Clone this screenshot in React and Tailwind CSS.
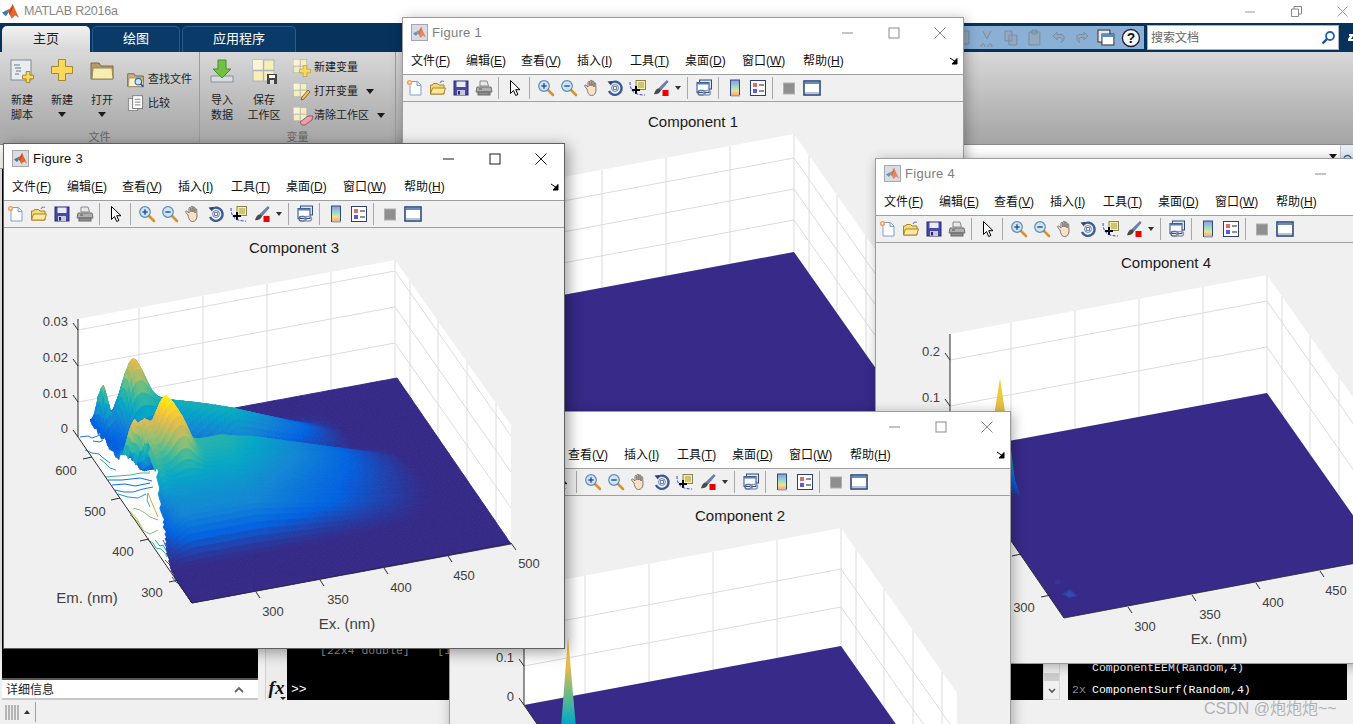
import React from 'react';

// ---- surface of Figure 3 ----
const PARULA = [[53,42,135],[3,99,225],[20,133,212],[6,167,198],[56,185,158],[146,191,115],[217,186,86],[252,206,46],[249,251,14]];
const parula = (t) => {
  const x = Math.min(0.999, Math.max(0, t)) ** 1.15 * (PARULA.length - 1);
  const i = Math.floor(x), f = x - i;
  const c = PARULA[i].map((p, k) => Math.round(p + (PARULA[i + 1][k] - p) * f));
  return `rgb(${c[0]},${c[1]},${c[2]})`;
};
const gs = (x, c, s) => Math.exp(-(((x - c) / s) ** 2) / 2);
const sm = (a, b, x) => {
  const t = Math.min(1, Math.max(0, (x - a) / (b - a)));
  return t * t * (3 - 2 * t);
};
const noise = (a, b) => {
  const s = Math.sin(a * 127.1 + b * 311.7) * 43758.5453;
  return s - Math.floor(s);
};

function height(u, v, i, j) {
  const R = 1 - 2.5 * (v - 0.45) ** 2;
  const F = Math.max(0, Math.min(1, 1 - (u - 0.3) / (0.58 * R)));
  const S = sm(0.18, 0.33, v) * (0.62 + 0.38 * sm(0.32, 0.6, v)) * (1 - sm(0.58, 0.66, v) * 0.9) * (1 - sm(0.78, 0.95, v) * 0.6);
  let z = 54 * F * S * sm(-0.03, 0.1, u);
  const rv = 0.9 - 0.16 * Math.min(1, Math.max(0, (u - 0.14) / 0.25));
  const A = sm(0.05, 0.14, u) * (u < 0.39 ? 44 : Math.max(0, 44 * (1 - (u - 0.39) / 0.36)));
  z += A * gs(v, rv, 0.065);
  z += 24 * sm(0.65, 0.8, v) * Math.exp(-u / 0.07);
  z += 36 * gs(u, 0.14, 0.028) * gs(v, 0.9, 0.05);
  z += 47 * gs(u, 0.123, 0.033) * gs(v, 0.589, 0.05);
  z += 25 * gs(u, 0.158, 0.028) * gs(v, 0.522, 0.035);
  z += 28 * gs(u, 0.055, 0.016) * gs(v, 0.68, 0.045);
  z += 42 * gs(u, 0.064, 0.01) * gs(v, 0.96, 0.03);
  // the cut edge of the data stands up as a ridge, with a blue hollow behind it
  z += 22 * sm(0.35, 0.5, v) * (1 - sm(0.66, 0.72, v)) * gs(u, 0.06, 0.014);
  z += 18 * gs(v, 0.65, 0.05) * (1 - sm(0.05, 0.09, u));
  z += 10 * (noise(i, j) - 0.4) * Math.exp(-u / 0.07) * sm(0.58, 0.72, v);
  return Math.max(0, z);
}
// the jagged peaks are more orange than their height gives
const tint = (u, v) => 22 * gs(u, 0.055, 0.02) * gs(v, 0.68, 0.05) + 15 * gs(u, 0.064, 0.012) * gs(v, 0.96, 0.04);

const project = (u, v, z) => [192 + 319 * u - 114 * v, 603 - 59 * u - 166 * v - z];

function buildMesh() {
  const NU = 100, NV = 72, quads = [];
  const us = Array.from({ length: NU + 1 }, (_, i) => (i / NU) ** 1.6);
  const pts = [];
  for (let j = 0; j <= NV; j++) {
    pts.push(us.map((u, i) => height(u, j / NV, i, j)));
  }
  for (let j = NV - 1; j >= 0; j--) {
    const v0 = j / NV, v1 = (j + 1) / NV;
    const cut = (v0 < 0.58 ? 0.05 * sm(0.12, 0.5, v0) : 0.03) + 0.006 * noise(j, 3) * sm(0.2, 0.4, v0);
    for (let i = NU - 1; i >= 0; i--) {
      if (us[i] < cut) continue;
      const a = project(us[i], v0, pts[j][i]);
      const b = project(us[i + 1], v0, pts[j][i + 1]);
      const c = project(us[i + 1], v1, pts[j + 1][i + 1]);
      const d = project(us[i], v1, pts[j + 1][i]);
      const avg = (pts[j][i] + pts[j][i + 1] + pts[j + 1][i] + pts[j + 1][i + 1]) / 4;
      quads.push({ p: [a, b, c, d].map((q) => q[0].toFixed(1) + ',' + q[1].toFixed(1)).join(' '), c: parula((avg + tint(us[i], v0)) / 105) });
    }
  }
  return quads;
}
const MESH = buildMesh();

const CONTOURS = [
  ['#1a78d8', '80,437 88,436 92,438 100,435 105,433'],
  ['#1a78d8', '93,441 100,442 103,440'],
  ['#1f8fd0', '85,450 92,453 99,454 102,457 110,463'],
  ['#2aa8b8', '100,459 106,464 110,468 116,470'],
  ['#38b99e', '105,477 118,476 130,475 141,473 150,473'],
  ['#0f6fe0', '108,480 122,480 140,478 152,481'],
  ['#0f6fe0', '112,485 125,484 135,486 150,483'],
  ['#1a78d8', '115,490 124,492 133,492 143,489 153,487'],
  ['#1a9ad0', '118,494 128,497 138,498 146,494'],
  ['#d9ba56', '140,470 146,468 150,472'],
  ['#d9a83a', '148,493 152,503 155,510 158,517'],
  ['#92bf73', '133,508 140,510 145,513 150,517 158,520'],
  ['#38b99e', '148,493 147,500 150,507'],
  ['#92bf73', '130,515 138,522 144,531 150,534 158,530'],
  ['#d9ba56', '130,511 137,519 142,528'],
  ['#38b99e', '148,540 153,543 156,548 161,549 165,553 167,557'],
  ['#06a7c6', '155,540 160,546 163,545 167,552 170,555'],
  ['#1a78d8', '163,540 168,551 172,555 175,562 178,566'],
  ['#1a78d8', '165,560 170,565 175,566'],
  ['#0363e1', '172,577 176,582 181,585'],
];

// ---- axes, shared by the four figures ----
function Plot({ title, levels, topLeft, extra }) {
  const a = levels;
  const left = a.map((l) => l[0]);
  return (
    <svg width="560" height="420" viewBox="4 228 560 420" className="block">
      <defs>
        <linearGradient id="spikeA" gradientUnits="userSpaceOnUse" x1="0" y1="369" x2="0" y2="470">
          <stop offset="0" stopColor="#f9d030" />
          <stop offset="0.3" stopColor="#e5b84e" />
          <stop offset="0.6" stopColor="#5cba90" />
          <stop offset="0.85" stopColor="#06a7c6" />
          <stop offset="1" stopColor="#1485d4" />
        </linearGradient>
        <linearGradient id="spikeB" gradientUnits="userSpaceOnUse" x1="0" y1="363" x2="0" y2="482">
          <stop offset="0" stopColor="#fbd12c" />
          <stop offset="0.35" stopColor="#d9ba56" />
          <stop offset="0.65" stopColor="#06a7c6" />
          <stop offset="0.88" stopColor="#0363e1" />
          <stop offset="1" stopColor="#352a87" />
        </linearGradient>
      </defs>
      <text x="294" y="253" textAnchor="middle" fontSize="15" fill="#1a1a1a">{title}</text>
      <polygon points={`78,${topLeft} 395,260 395,378 78,437`} fill="#fff" />
      <polygon points="395,260 511,425 511,543 395,378" fill="#fff" />
      <g stroke="#dcdcdc" strokeWidth="1" fill="none">
        {[139, 203, 267, 331].map((x) => (
          <line key={x} x1={x} x2={x} y1={topLeft - (x - 78) * 0.186} y2={437 - (x - 78) * 0.186} />
        ))}
        {left.slice(1).map((y) => (
          <line key={y} x1="78" y1={y} x2="395" y2={y - 59} />
        ))}
        {left.slice(1).map((y) => (
          <line key={'r' + y} x1="395" y1={y - 59} x2="511" y2={y - 59 + 165} />
        ))}
        {[410, 438, 467, 496].map((x) => (
          <line key={x} x1={x} x2={x} y1={260 + (x - 395) * 1.422} y2={378 + (x - 395) * 1.422} />
        ))}
        <line x1="395" y1="260" x2="395" y2="378" />
      </g>
      {extra}
      <g stroke="#2b2b2b" strokeWidth="1" fill="none">
        <line x1="78" y1={topLeft} x2="78" y2="437" />
        <line x1="78" y1="437" x2="192" y2="603" />
        <line x1="192" y1="603" x2="511" y2="543" strokeWidth="0.8" />
        {left.map((y) => <line key={y} x1="78" y1={y} x2="73" y2={y - 7} />)}
        <path d="M92 457l-9 2M120 498l-9 2M149 539l-9 2M179 580l-10 2" />
        <path d="M256 592l4 6M320 580l4 6M384 568l4 6M448 556l4 6M511 543l5 7" />
      </g>
      <g fontSize="13" fill="#404040">
        {a.map((l) => (
          <text key={l[1]} x="68" y={l[0] - 4.5} textAnchor="end">{l[1]}</text>
        ))}
        <text x="66" y="475" textAnchor="middle">600</text>
        <text x="95" y="516" textAnchor="middle">500</text>
        <text x="123" y="556" textAnchor="middle">400</text>
        <text x="152" y="597" textAnchor="middle">300</text>
        <text x="273" y="616" textAnchor="middle">300</text>
        <text x="338" y="604" textAnchor="middle">350</text>
        <text x="401" y="592" textAnchor="middle">400</text>
        <text x="464" y="580" textAnchor="middle">450</text>
        <text x="529" y="568" textAnchor="middle">500</text>
        <text x="87" y="603" textAnchor="middle" fontSize="15">Em. (nm)</text>
        <text x="347" y="629" textAnchor="middle" fontSize="15">Ex. (nm)</text>
      </g>
    </svg>
  );
}

const Floor = () => <polygon points="78,437 395,378 511,543 192,603" fill="#372a88" />;

const Surface3 = () => (
  <g>
    <polygon points="78,437 395,378 511,543 192,603" fill="#fff" />
    <g fill="none" strokeWidth="1">
      {CONTOURS.map((c, i) => <polyline key={i} points={c[1]} stroke={c[0]} />)}
    </g>
    {MESH.map((q, i) => <polygon key={i} points={q.p} fill={q.c} stroke={q.c} strokeWidth="0.9" />)}
  </g>
);

const Surface2 = () => (
  <g>
    <Floor />
    <polygon points="122,369 115,460 130,460" fill="url(#spikeA)" />
  </g>
);

const Surface4 = () => (
  <g>
    <Floor />
    <polygon points="128,363 119,420 112,470 150,484 143,465 139,435 133,397" fill="url(#spikeB)" />
    <polygon points="190,579 198,574 206,581 197,583" fill="#3358c0" opacity="0.45" />
    <polygon points="194,579 198,576 203,581 197,582" fill="#2a5cd0" opacity="0.5" />
    <polygon points="182,566 186,564 190,568 184,570" fill="#4a40a8" opacity="0.35" />
  </g>
);

// ---- small drawings ----
const Logo = ({ s = 16, faded }) => (
  <svg width={s} height={s} viewBox="0 0 20 20" className={faded ? 'opacity-70' : ''}>
    <polygon points="0,11.5 5,8.5 8,11 4.5,15.5" fill="#2f7fb8" />
    <polygon points="5,8.5 8,11 11,6 12.5,2 9,7" fill="#d9541e" />
    <polygon points="12.5,1 15.5,8 20,17.5 15.5,14.5 11.5,18.5 9,14 8,11 11,6" fill="#e8652a" />
    <polygon points="12.5,1 11,6 8,11 9,14 11,9 12.5,6" fill="#b8361a" />
  </svg>
);

const Ic = ({ children }) => <svg width="18" height="18" viewBox="0 0 18 18">{children}</svg>;
const NewIcon = () => <Ic><path d="M4 2.5h7.5l3.5 3.5v10H4z" fill="#fff" stroke="#7f9fc8" /><path d="M11 2.5v4h4" fill="#dfe8f4" stroke="#7f9fc8" /><circle cx="3.5" cy="3.5" r="2.6" fill="#f4a060" /><circle cx="3.5" cy="3.5" r="1" fill="#fff" /></Ic>;
const OpenIcon = () => <Ic><path d="M1.5 15V6h2l1-1.5h4L10 6h5v9z" fill="#f5d878" stroke="#a8852a" /><path d="M1.5 15l2-6h13l-2 6z" fill="#fbe9a0" stroke="#a8852a" /><path d="M11 4c1-2 3-2.5 4-1.5" fill="none" stroke="#6f8fb8" strokeWidth="1.2" /></Ic>;
const SaveIcon = () => <Ic><rect x="2" y="2" width="14" height="14" fill="#4848a8" stroke="#282870" /><rect x="4.5" y="2.5" width="9" height="5.5" fill="#e8ecf8" /><rect x="5" y="11" width="8" height="5" fill="#c8c8d8" /><rect x="6" y="12" width="2" height="3.5" fill="#282870" /></Ic>;
const PrintIcon = () => <Ic><path d="M5 2h7l1.5 5H5z" fill="#e8e8e8" stroke="#8a8a8a" /><path d="M2 8h14l1 5H1z" fill="#b0b0b0" stroke="#707070" /><rect x="3" y="13" width="12" height="3" fill="#8f8f8f" stroke="#666" /><path d="M4 10h3" stroke="#555" /></Ic>;
const CursorIcon = () => <Ic><path d="M4.5 1.5v13l3-3 2.2 5 2.2-1-2.2-4.8h4.3z" fill="#fff" stroke="#000" strokeWidth="1" /></Ic>;
const Lens = ({ plus }) => (
  <Ic>
    <path d="M10.5 10.5l5.5 5.5" stroke="#d8932c" strokeWidth="2.6" strokeLinecap="round" />
    <circle cx="7" cy="7" r="5.3" fill="#cfe4f6" stroke="#5d8bb5" strokeWidth="1.2" />
    <path d="M4.3 7h5.4" stroke="#20508c" strokeWidth="1.4" />
    {plus && <path d="M7 4.3v5.4" stroke="#20508c" strokeWidth="1.4" />}
  </Ic>
);
const HandIcon = () => <Ic><path d="M4 10L1.8 7.5c-.8-1 .4-2 1.3-1.2L5 8V3.4c0-1.3 1.6-1.3 1.7 0L7 7V2.2c0-1.3 1.8-1.3 1.8 0L9 7V2.8c0-1.3 1.8-1.3 1.8 0L11 8V4.6c0-1.2 1.7-1.2 1.7 0l.3 6.4c0 3-1.6 5.5-4.5 5.5S5 14 4 10z" fill="#fbe0c4" stroke="#5a5a5a" strokeWidth="0.8" /></Ic>;
const RotateIcon = () => <Ic><path d="M5 4A6.6 6.6 0 1 1 3 12" fill="none" stroke="#3c5a94" strokeWidth="2.4" /><path d="M1.5 2.5L6.5 2 5 6.5z" fill="#2c3f70" /><circle cx="9" cy="9" r="3.4" fill="#fff" stroke="#5d7aa8" /><path d="M7.5 7.5h3v3h-3z" fill="none" stroke="#3c5a94" strokeWidth="0.8" /></Ic>;
const DataIcon = () => <Ic><rect x="7" y="1.5" width="9.5" height="9" fill="#f7ef9c" stroke="#8c8450" /><path d="M9 4h6M9 6h6M9 8h6" stroke="#8c8450" strokeWidth="0.8" /><path d="M7 7v8M3 11h8" stroke="#000" strokeWidth="2" /><path d="M1 3c0 7 2 13 15 13" fill="none" stroke="#2030e0" strokeDasharray="3 1.4" strokeWidth="0.9" /></Ic>;
const BrushIcon = () => <Ic><path d="M14.8 1.5l1.4 1.2L9 11l-2-1.8z" fill="#6a84b8" stroke="#4a5a80" strokeWidth="0.6" /><path d="M7 9.2c-2.5.2-4 2.4-5 6 3 .3 6-.6 7-4.2z" fill="#4a4a4a" /><rect x="10.5" y="11" width="6" height="6" fill="#ee0000" /></Ic>;
const SmallArrow = () => <svg width="6" height="4" viewBox="0 0 6 4"><path d="M0 0h6L3 4z" fill="#333" /></svg>;
const LinkIcon = () => <Ic><rect x="4.5" y="1" width="12" height="9" fill="#dfe6f2" stroke="#2c4a80" /><rect x="2" y="3.5" width="12" height="10" fill="#fff" stroke="#2c4a80" /><rect x="2" y="3.5" width="12" height="2" fill="#5b7bb0" /><rect x="3" y="11.5" width="7" height="4.5" rx="2.2" fill="none" stroke="#5a6e90" strokeWidth="1.4" /><rect x="8.5" y="11.5" width="7" height="4.5" rx="2.2" fill="none" stroke="#8a9ab8" strokeWidth="1.4" /></Ic>;
const BarIcon = () => (
  <Ic>
    <defs>
      <linearGradient id="cbar" x1="0" y1="0" x2="0" y2="1">
        <stop offset="0" stopColor="#8a9ae0" />
        <stop offset="0.45" stopColor="#a0dcc8" />
        <stop offset="0.7" stopColor="#f0e090" />
        <stop offset="1" stopColor="#f0a880" />
      </linearGradient>
    </defs>
    <rect x="4.5" y="1" width="9" height="15.5" fill="url(#cbar)" stroke="#2c4a80" />
    <rect x="5" y="16" width="9" height="1.5" fill="#9aa4b8" />
  </Ic>
);
const LegendIcon = () => <Ic><rect x="1.5" y="1.5" width="15" height="15" fill="#fff" stroke="#2c3f78" /><rect x="4" y="4" width="4" height="4" fill="#e06a6a" /><rect x="4" y="10" width="4" height="4" fill="#5a5ae0" /><path d="M10 6h5M10 12h5" stroke="#222" strokeWidth="1.2" /></Ic>;
const GrayIcon = () => <Ic><rect x="3.5" y="4" width="11" height="11" fill="#8f8f8f" stroke="#b0b0b0" /></Ic>;
const ToolsIcon = () => <Ic><rect x="1" y="2" width="16" height="14" fill="#fff" stroke="#2c4a80" strokeWidth="1.6" /><rect x="2" y="3" width="14" height="2" fill="#6a8ab8" /><rect x="2" y="13" width="14" height="2" fill="#b8c4d4" /></Ic>;

const TOOLS = [NewIcon, OpenIcon, SaveIcon, PrintIcon, '|', CursorIcon, '|', () => <Lens plus />, () => <Lens />, HandIcon, RotateIcon, DataIcon, BrushIcon, 'a', '|', LinkIcon, '|', BarIcon, LegendIcon, '|', GrayIcon, ToolsIcon];
const MENUS = [['文件', 'F', 'w-[38px]'], ['编辑', 'E', 'w-[38px]'], ['查看', 'V', 'w-[39px]'], ['插入', 'I', 'w-[36px]'], ['工具', 'T', 'w-[38px]'], ['桌面', 'D', 'w-[40px]'], ['窗口', 'W', 'w-[44px]'], ['帮助', 'H', 'w-[41px]']];

// one figure window
function Figure({ n, active, className, levels, topLeft, extra }) {
  const ctl = active ? '#1a1a1a' : '#8a8a8a';
  return (
    <div className={`absolute w-[562px] h-[506px] bg-[#f0f0f0] border flex flex-col ${active ? 'border-[#5f5f5f] shadow-[3px_3px_14px_rgba(0,0,0,0.4)]' : 'border-[#9c9c9c] shadow-[2px_2px_12px_rgba(0,0,0,0.3)]'} ${className}`}>
      <div className="h-[29px] bg-white flex items-center pl-[8px] relative">
        <span className="w-[17px] h-[17px] bg-[#d8dce4] border border-[#a8a8a8] flex items-center justify-center">
          <Logo s={13} faded={!active} />
        </span>
        <span className={`ml-[4px] text-[13px] tracking-[0.3px] ${active ? 'text-[#111]' : 'text-[#7e7e7e]'}`}>Figure {n}</span>
        <span className="ml-auto flex items-center gap-[34px] pr-[17px]">
          <svg width="12" height="12" viewBox="0 0 12 12"><path d="M0 6h11" stroke={ctl} /></svg>
          <svg width="12" height="12" viewBox="0 0 12 12"><rect x="1" y="1" width="10" height="10" fill="none" stroke={ctl} /></svg>
          <svg width="12" height="12" viewBox="0 0 12 12"><path d="M.5.5l11 11M11.5.5l-11 11" stroke={ctl} /></svg>
        </span>
      </div>
      <div className="h-[27px] bg-white border-b border-[#a0a0a0] box-content flex items-center pl-[8px] gap-[17px] text-[12px] text-[#111] relative">
        {MENUS.map((m) => (
          <span key={m[1]} className={`whitespace-nowrap ${m[2]}`}>{m[0]}(<span className="underline">{m[1]}</span>)</span>
        ))}
        <svg width="8" height="8" viewBox="0 0 8 8" className="absolute right-[5px] top-[10px]"><path d="M0 1l6 4M7 1.5V7H2z" stroke="#000" fill="#000" /></svg>
      </div>
      <div className="h-[26px] border-b border-[#a0a0a0] box-content flex items-center">
        {TOOLS.map((T, i) =>
          T === '|' ? <span key={i} className="w-[1px] h-[22px] bg-[#a8a8a8] ml-[3px] mr-[4px]" />
          : T === 'a' ? <span key={i} className="w-[12px] flex justify-center"><SmallArrow /></span>
          : <span key={i} className="w-[23px] flex justify-center"><T /></span>
        )}
      </div>
      <Plot title={`Component ${n}`} levels={levels} topLeft={topLeft} extra={extra} />
    </div>
  );
}

// ---- ribbon drawings ----
const R = ({ children, s = 24 }) => <svg width={s} height={s} viewBox="0 0 24 24">{children}</svg>;
const Plus = ({ x, y, r }) => <path d={`M${x - r / 3} ${y - r}h${(r * 2) / 3}v${(r * 2) / 3}h${(r * 2) / 3}v${(r * 2) / 3}h${(-r * 2) / 3}v${(r * 2) / 3}h${(-r * 2) / 3}v${(-r * 2) / 3}h${(-r * 2) / 3}v${(-r * 2) / 3}h${(r * 2) / 3}z`} fill="#fbd85a" stroke="#a8862c" />;
const NewScript = () => <R><rect x="1" y="1" width="20" height="20" fill="#e8edf2" stroke="#7f8a94" /><path d="M4 6h6M5 9h6M6 12h5M5 15h4" stroke="#6b7680" strokeWidth="1.2" /><Plus x={18} y={18} r={5.5} /></R>;
const BigPlus = () => <R><Plus x={12} y={11} r={10.5} /></R>;
const BigFolder = () => <R><path d="M1 20V4h8l2 3h12v13z" fill="#b59a6a" stroke="#7a6a4a" /><path d="M2 20l1-11h19l1 11z" fill="#f7edb0" stroke="#9a8a5a" /></R>;
const Grid = ({ s = 24 }) => (
  <R s={s}>
    <rect x="1" y="1" width="21" height="21" fill="#f9eeb4" stroke="#a8b4c8" />
    <rect x="1" y="1" width="10" height="10" fill="#fbf5d4" />
    <path d="M11.5 1v21M1 11.5h21" stroke="#a8b4c8" strokeWidth="1.4" />
  </R>
);
const ImportIcon = () => <R><path d="M1 17h22v6H1z" fill="#d8dce0" stroke="#8a9098" /><path d="M8 1h8v9h5L12 19 3 10h5z" fill="#72c242" stroke="#4a8a2c" /></R>;
const SaveVar = () => (
  <span className="relative block w-[24px] h-[24px]">
    <Grid />
    <svg width="10" height="10" viewBox="0 0 10 10" className="absolute right-[-1px] bottom-[-1px]"><rect width="10" height="10" fill="#444" /><rect x="2" y="1" width="6" height="3" fill="#fff" /><rect x="3" y="6" width="4" height="4" fill="#ddd" /></svg>
  </span>
);
const SmFolder = () => <R s={17}><path d="M1 22V4h9l2 3h11v15z" fill="#c8b080" stroke="#7a6a4a" strokeWidth="1.4" /><path d="M2 22l1-12h19l1 12z" fill="#fbf5d8" stroke="#9a8a5a" /><circle cx="16" cy="15" r="4.5" fill="#cfe4f6" stroke="#3a6ea0" strokeWidth="1.6" /><path d="M19 18l4 4" stroke="#20508c" strokeWidth="2.4" /></R>;
const SmCompare = () => <R s={17}><rect x="2" y="5" width="13" height="17" fill="#eee" stroke="#8a8a8a" strokeWidth="1.3" /><rect x="8" y="1" width="14" height="18" fill="#fff" stroke="#777" strokeWidth="1.3" /><path d="M11 6h8M11 10h8M11 14h8" stroke="#777" strokeWidth="1.3" /></R>;
const VarIcon = ({ kind }) => (
  <span className="relative block w-[17px] h-[17px]">
    <Grid s={15} />
    {kind === 'new' && <svg width="12" height="12" viewBox="0 0 24 24" className="absolute right-[-1px] bottom-[-1px]"><Plus x={12} y={12} r={11} /></svg>}
    {kind === 'open' && <svg width="12" height="12" viewBox="0 0 12 12" className="absolute right-[-2px] bottom-[-1px]"><path d="M1 11l1-3 6-7 2 2-6 7z" fill="#f3c060" stroke="#8a6a2c" /></svg>}
    {kind === 'clear' && <svg width="15" height="11" viewBox="0 0 15 11" className="absolute right-[-4px] bottom-[-2px]"><path d="M1 7l8-6h5l-1 4-7 5H3z" fill="#eaa0ac" stroke="#9a5a68" /></svg>}
  </span>
);
const Tri = () => <svg width="8" height="5" viewBox="0 0 8 5"><path d="M0 0h8L4 5z" fill="#1a1a1a" /></svg>;

function BigBtn({ icon, l1, l2, tri, w = 'w-[40px]' }) {
  return (
    <div className={`${w} flex flex-col items-center pt-[7px]`}>
      <div className="h-[26px]">{icon}</div>
      <div className="mt-[8px] text-[11px] leading-[15px] text-[#222] whitespace-nowrap">{l1}</div>
      {l2 && <div className="text-[11px] leading-[15px] text-[#222] whitespace-nowrap">{l2}</div>}
      {tri && <div className="mt-[4px]"><Tri /></div>}
    </div>
  );
}

function SmBtn({ icon, label, tri, gap = 'gap-[4px]' }) {
  return (
    <div className={`flex items-center ${gap} h-[24px] text-[11px] text-[#222] whitespace-nowrap`}>
      {icon}<span>{label}</span>
      {tri && <span className="ml-[4px] flex items-center"><Tri /></span>}
    </div>
  );
}

const Q = ({ d }) => <svg width="18" height="18" viewBox="0 0 18 18" className="opacity-60"><path d={d} fill="#9aa6b2" stroke="#6a7684" /></svg>;

const Tab = ({ children, w, on }) => (
  <div className={`${w} h-[26px] rounded-t-[5px] flex items-center justify-center pb-[1px] text-[13px] ${on ? 'bg-gradient-to-b from-[#f2f2f2] to-[#d6d6d6] text-[#222]' : 'bg-[#0a3a68] border border-b-0 border-[#2a5c8c] text-white'}`}>
    {children}
  </div>
);

export default function App() {
  return (
    <div className="relative w-[1353px] h-[724px] overflow-hidden bg-[#f0f0f0] flex flex-col [font-family:'Liberation_Sans','Noto_Sans_CJK_SC',sans-serif]">
      {/* main MATLAB window */}
      <div className="h-[23px] bg-white flex items-center pl-[2px] shrink-0">
        <Logo s={17} />
        <span className="ml-[5px] text-[12.5px] text-[#858585] tracking-[-0.2px]">MATLAB R2016a</span>
        <span className="ml-auto flex items-center gap-[35px] pr-[5px]">
          <svg width="11" height="11" viewBox="0 0 11 11"><path d="M0 6h10" stroke="#9a9a9a" /></svg>
          <svg width="11" height="11" viewBox="0 0 11 11"><path d="M.5 3h7v7.5h-7zM3 3V.5h7.5v7.5H8" fill="none" stroke="#8a8a8a" /></svg>
          <svg width="11" height="11" viewBox="0 0 11 11"><path d="M.5.5l10 10M10.5.5l-10 10" stroke="#9a9a9a" /></svg>
        </span>
      </div>
      <div className="h-[29px] bg-[#06325c] flex items-end pl-[2px] gap-[2px] shrink-0 relative">
        <Tab w="w-[88px]" on>主页</Tab>
        <Tab w="w-[88px]">绘图</Tab>
        <Tab w="w-[114px]">应用程序</Tab>
        <div className="ml-auto self-center flex items-center gap-[3px]">
          <div className="w-[190px] h-[23px] bg-[#8bb0d6] flex items-center justify-end pr-[3px] gap-[6px]">
            <Q d="M2 2h13v13H2z" />
            <Q d="M5 2l4 8 4-8M5 15a2 2 0 1 0 .1 0zM12 15a2 2 0 1 0 .1 0z" />
            <Q d="M3 2h7v10H3zM7 6h8v10H7z" />
            <Q d="M3 3h11v13H3zM6 1h5v4H6z" />
            <Q d="M3 7l4-4v2.5h5c3 0 3 7-1 8 2-2 1-5-1-5H7V11z" />
            <Q d="M15 7l-4-4v2.5H6c-3 0-3 7 1 8-2-2-1-5 1-5h3V11z" />
            <svg width="18" height="18" viewBox="0 0 18 18"><rect x="1" y="1" width="12" height="12" fill="#e8e8e8" stroke="#333" /><rect x="5" y="5" width="12" height="11" fill="#fff" stroke="#333" /><rect x="5" y="5" width="12" height="3" fill="#5a8ac0" /></svg>
            <svg width="20" height="20" viewBox="0 0 20 20"><circle cx="10" cy="10" r="8.6" fill="#f4f6f8" stroke="#223" strokeWidth="1.4" /><text x="10" y="15" textAnchor="middle" fontSize="14" fontWeight="700" fill="#111">?</text></svg>
          </div>
          <div className="w-[192px] h-[25px] bg-white border border-[#b0b0b0] flex items-center pl-[3px] pr-[2px] text-[12px] text-[#666]">
            搜索文档
            <svg width="15" height="15" viewBox="0 0 15 15" className="ml-auto"><circle cx="9" cy="6" r="4" fill="#fff" stroke="#1c62b8" strokeWidth="1.8" /><path d="M6 9l-4.5 4.5" stroke="#1c4f98" strokeWidth="2.4" /></svg>
          </div>
          <svg width="11" height="10" viewBox="3 0 11 10"><path d="M10 1h4v2l-2 3h2v2h-5V6l2-3h-1z" fill="#fff" /></svg>
        </div>
      </div>
      {/* ribbon */}
      <div className="h-[93px] shrink-0 bg-gradient-to-b from-[#d8d8d8] to-[#a4a4a4] flex border-b border-[#8a8a8a]">
        <div className="w-[200px] border-r border-[#9c9c9c] flex flex-col">
          <div className="flex-1 flex pl-[2px]">
            <BigBtn icon={<NewScript />} l1="新建" l2="脚本" />
            <BigBtn icon={<BigPlus />} l1="新建" tri />
            <BigBtn icon={<BigFolder />} l1="打开" tri />
            <div className="ml-[5px] pt-[15px]">
              <SmBtn icon={<SmFolder />} label="查找文件" />
              <SmBtn icon={<SmCompare />} label="比较" />
            </div>
          </div>
          <div className="h-[14px] bg-[#adadad] text-center text-[11px] leading-[14px] text-[#666]">文件</div>
        </div>
        <div className="w-[196px] border-r border-[#9c9c9c] flex flex-col">
          <div className="flex-1 flex pl-[2px]">
            <BigBtn icon={<ImportIcon />} l1="导入" l2="数据" />
            <BigBtn icon={<SaveVar />} l1="保存" l2="工作区" w="w-[44px]" />
            <div className="ml-[7px] pt-[3px]">
              <SmBtn icon={<VarIcon kind="new" />} label="新建变量" />
              <SmBtn icon={<VarIcon kind="open" />} label="打开变量" tri />
              <SmBtn icon={<VarIcon kind="clear" />} label="清除工作区" tri />
            </div>
          </div>
          <div className="h-[14px] bg-[#adadad] text-center text-[11px] leading-[14px] text-[#666]">变量</div>
        </div>
      </div>
      {/* address strip */}
      <div className="h-[24px] shrink-0 bg-white border-b border-[#a0a0a0] flex justify-end">
        <span className="mt-[9px] mr-[3px]"><Tri /></span>
        <span className="w-[13px] h-[14px] bg-[#e8eef6] border-l border-[#c8c8c8] flex items-end justify-center">
          <svg width="9" height="7" viewBox="0 0 9 7"><path d="M1 7a3.5 3.5 0 0 1 7 0" fill="none" stroke="#2c6ab8" strokeWidth="1.5" /></svg>
        </span>
      </div>
      {/* panels */}
      <div className="flex-1 min-h-0 flex pl-[2px]">
        <div className="w-[256px] flex flex-col">
          <div className="flex-1 bg-black" />
          <div className="h-[22px] bg-white border-t-2 border-[#555] border-b-2 border-b-[#c8c8c8] flex items-center pt-[1px] pl-[4px] pr-[14px] text-[12px] text-[#222]">
            详细信息
            <svg width="10" height="7" viewBox="0 0 10 7" className="ml-auto"><path d="M1 6l4-4 4 4" fill="none" stroke="#666" strokeWidth="1.8" /></svg>
          </div>
        </div>
        <div className="w-[7px]" />
        <div className="w-[22px] bg-[#ececec] border-l border-[#d0d0d0] flex flex-col justify-end items-center pb-[1px] relative">
          <span className="[font-family:'Liberation_Serif',serif] italic font-bold text-[19px] leading-[22px] text-[#111]">fx</span>
          <svg width="6" height="3" viewBox="0 0 6 3" className="absolute right-[1px] bottom-[0px]"><path d="M0 0h6L3 3z" fill="#222" /></svg>
        </div>
        <div className="w-[756px] bg-black relative text-[11.5px] text-[#9a9a9a]">
          <div className="h-[473px]" />
          <div className="pl-[33px] [font-family:'Liberation_Mono',monospace] whitespace-pre">[22x4 double]    [1</div>
          <div className="absolute left-[4px] bottom-[1px] text-white text-[13px] [font-family:'Liberation_Mono',monospace]">{'>>'}</div>
        </div>
        <div className="w-[17px] bg-[#f0f0f0] border border-[#d8d8d8] flex flex-col items-center justify-end pb-[5px] gap-[7px]">
          <div className="w-[15px] h-[8px] bg-[#cdcdcd]" />
          <svg width="8" height="6" viewBox="0 0 8 6"><path d="M1 1l3 3 3-3" fill="none" stroke="#555" strokeWidth="1.6" /></svg>
        </div>
        <div className="w-[8px]" />
        <div className="w-[279px] bg-black flex flex-col justify-end text-[11.5px] [font-family:'Liberation_Mono',monospace] text-white">
          <div className="h-[22px] pl-[24px] leading-[24px]">ComponentEEM(Random,4)</div>
          <div className="h-[22px] pl-[4px] leading-[24px] flex"><span className="w-[20px] text-[#8a8a8a]">2x</span>ComponentSurf(Random,4)</div>
        </div>
        <div className="flex-1 bg-[#f0f0f0]" />
      </div>
      <div className="h-[24px] shrink-0 flex items-center pl-[5px] gap-[3px]">
        <svg width="16" height="15" viewBox="0 0 16 15"><path d="M1 0v15M4 0v15M7 0v15M10 0v15M13 0v15" stroke="#b4b4b4" strokeWidth="2" /></svg>
        <svg width="6" height="4" viewBox="0 0 6 4"><path d="M0 4h6L3 0z" fill="#333" /></svg>
        <span className="w-[1px] h-[20px] bg-[#a0a0a0] ml-[2px]" />
      </div>

      {/* figure windows */}
      <Figure n={1} className="left-[402px] top-[17px]" topLeft={319} levels={[[437, '0'], [405, '0.1'], [374, '0.2'], [343, '0.3']]} extra={<Floor />} />
      <Figure n={4} className="left-[875px] top-[158px]" topLeft={319} levels={[[437, '0'], [391, '0.1'], [345, '0.2']]} extra={<Surface4 />} />
      <Figure n={2} className="left-[449px] top-[411px]" topLeft={319} levels={[[437, '0'], [398, '0.1'], [360, '0.2']]} extra={<Surface2 />} />
      <Figure n={3} active className="left-[3px] top-[143px]" topLeft={319} levels={[[437, '0'], [402, '0.01'], [366, '0.02'], [330, '0.03']]} extra={<Surface3 />} />

      <div className="absolute left-[1204px] top-[697px] text-[16px] text-[#b2b2b2] whitespace-nowrap">CSDN @炮炮炮~~</div>
    </div>
  );
}
